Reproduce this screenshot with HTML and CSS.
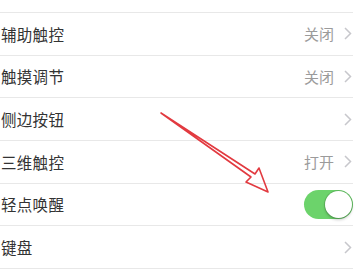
FILE: index.html
```
<!DOCTYPE html>
<html lang="zh">
<head>
<meta charset="utf-8">
<link rel="stylesheet" href="styles.css">
</head>
<body>
<div class="screen">
  <ul class="list">
    <li class="row"><span class="label">切换控制</span><span class="right"><span class="value">关闭</span><svg class="chev" viewBox="0 0 8 13"><polyline points="1,1 6.5,6.5 1,12"/></svg></span></li>
    <li class="row"><span class="label">辅助触控</span><span class="right"><span class="value">关闭</span><svg class="chev" viewBox="0 0 8 13"><polyline points="1,1 6.5,6.5 1,12"/></svg></span></li>
    <li class="row"><span class="label">触摸调节</span><span class="right"><span class="value">关闭</span><svg class="chev" viewBox="0 0 8 13"><polyline points="1,1 6.5,6.5 1,12"/></svg></span></li>
    <li class="row"><span class="label">侧边按钮</span><span class="right"><svg class="chev" viewBox="0 0 8 13"><polyline points="1,1 6.5,6.5 1,12"/></svg></span></li>
    <li class="row"><span class="label">三维触控</span><span class="right"><span class="value">打开</span><svg class="chev" viewBox="0 0 8 13"><polyline points="1,1 6.5,6.5 1,12"/></svg></span></li>
    <li class="row"><span class="label">轻点唤醒</span><span class="right"><span class="toggle"><span class="knob"></span></span></span></li>
    <li class="row"><span class="label">键盘</span><span class="right"><svg class="chev" viewBox="0 0 8 13"><polyline points="1,1 6.5,6.5 1,12"/></svg></span></li>
  </ul>
  <svg class="arrow" width="360" height="270" viewBox="0 0 360 270">
    <polygon points="161,113 255,174 259,168 268,192 246,182 251,177" />
  </svg>
</div>
</body>
</html>
```
FILE: styles.css
```
html, body {
  margin: 0;
  padding: 0;
  background: #ffffff;
}
.screen {
  position: relative;
  width: 360px;
  height: 270px;
  overflow: hidden;
  font-family: "Noto Sans CJK SC", "Noto Sans", sans-serif;
}
.list {
  list-style: none;
  margin: -29.67px 0 0 0;
  padding: 0;
  width: 353px;
}
.row {
  box-sizing: border-box;
  height: 42.67px;
  border-bottom: 1px solid #e8e8e8;
  display: flex;
  align-items: center;
  justify-content: space-between;
  padding-left: 1px;
}
.label {
  font-size: 15.5px;
  color: #333333;
  letter-spacing: 0.3px;
}
.right {
  display: flex;
  align-items: center;
  gap: 10px;
}
.value {
  font-size: 15px;
  color: #9b9b9b;
}
.chev {
  width: 8px;
  height: 13px;
  margin-right: 1px;
}
.chev polyline {
  fill: none;
  stroke: #c7c7cc;
  stroke-width: 1.5;
}
.toggle {
  position: relative;
  display: block;
  width: 49px;
  height: 29px;
  border-radius: 15px;
  background: #6cd36b;
}
.knob {
  position: absolute;
  right: 1px;
  top: 1px;
  width: 27px;
  height: 27px;
  border-radius: 50%;
  background: #ffffff;
  box-shadow: 0 0 0 1px rgba(0,0,0,0.12), 0 2px 3px rgba(0,0,0,0.2);
}
.arrow {
  position: absolute;
  left: 0;
  top: 0;
}
.arrow polygon {
  fill: none;
  stroke: #e23a40;
  stroke-width: 1.6;
  stroke-linejoin: round;
}
```
